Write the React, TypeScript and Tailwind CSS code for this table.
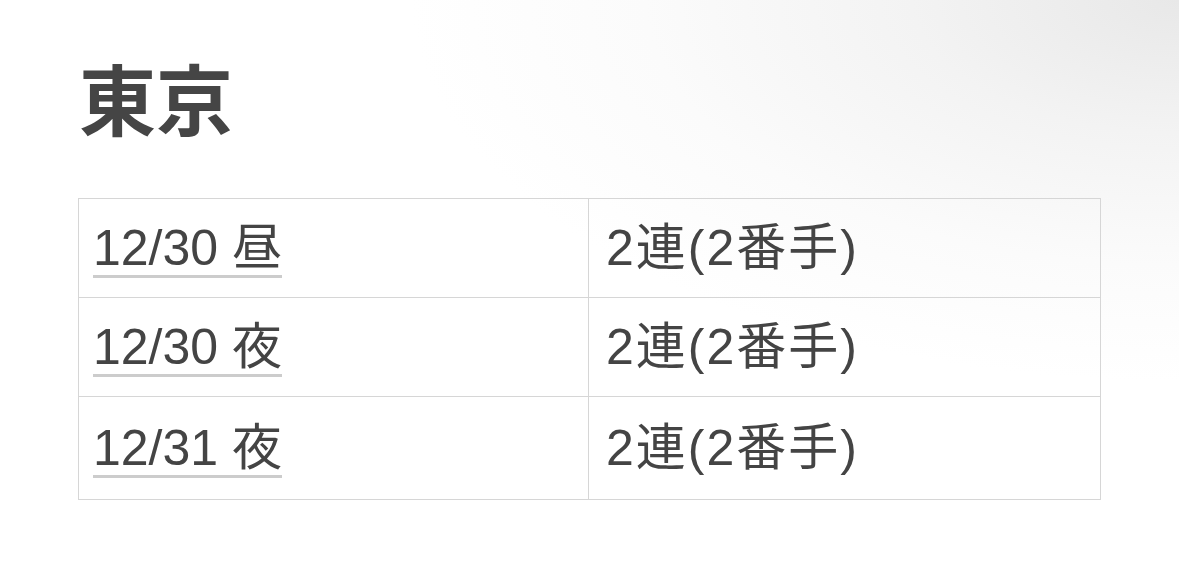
import React from "react";

const rows = [
  { date: "12/30 昼", val: "2連(2番手)" },
  { date: "12/30 夜", val: "2連(2番手)" },
  { date: "12/31 夜", val: "2連(2番手)" },
];

export default function App() {
  return (
    <div
      className="w-[1179px] h-[586px] overflow-hidden bg-[radial-gradient(ellipse_at_100%_0%,#e8e8e8_0%,#f3f3f3_16%,#fbfbfb_32%,#ffffff_46%)] text-[#444444]"
      style={{ fontFamily: '"Liberation Sans", "Noto Sans CJK JP", sans-serif' }}
    >
      <div className="pl-[78px] pt-[65px]">
        <h1 className="text-[77px] leading-[77px] font-bold pl-[1px] text-[#454545]">東京</h1>
        <table className="mt-[56px] w-[1023px] border-collapse table-fixed text-[50px]">
          <tbody>
            {rows.map((r, i) => (
              <tr key={i} className={i === 2 ? "h-[103px]" : "h-[99px]"}>
                <td className="w-[510px] border border-[#d6d6d6] pl-[14px] align-middle">
                  <span className="inline-block leading-[54px] border-b-[3px] border-[#cccccc]">
                    {r.date}
                  </span>
                </td>
                <td className="border border-[#d6d6d6] pl-[17px] align-middle">
                  <span className="inline-block leading-[54px] pb-[3px] tracking-[2px]">{r.val}</span>
                </td>
              </tr>
            ))}
          </tbody>
        </table>
      </div>
    </div>
  );
}
